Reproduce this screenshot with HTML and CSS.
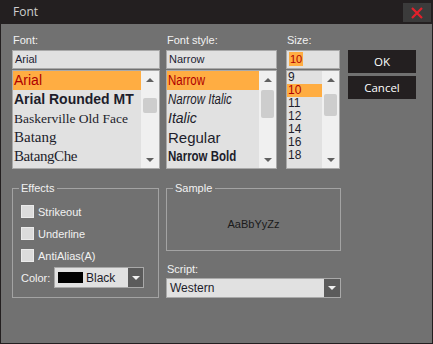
FILE: index.html
```html
<!DOCTYPE html>
<html lang="en">
<head>
    <meta charset="UTF-8">
    <title>Font</title>
    <link rel="stylesheet" href="styles.css">
</head>
<body>
    <div class="window">
        <div class="titlebar">
            <span class="title">Font</span>
            <button class="close">
                <svg width="12" height="12" viewBox="0 0 12 12"><path d="M1 1L11 11M11 1L1 11" stroke="#e3202b" stroke-width="2.2"/></svg>
            </button>
        </div>

        <div class="content">
            <div class="top">
                <div class="col col-font">
                    <div class="label">Font:</div>
                    <div class="field">Arial</div>
                    <div class="list">
                        <ul class="items">
                            <li class="sel f-arial">Arial</li>
                            <li class="f-rounded">Arial Rounded MT</li>
                            <li class="f-bask">Baskerville Old Face</li>
                            <li class="f-batang">Batang</li>
                            <li class="f-batangche">BatangChe</li>
                        </ul>
                        <div class="scrollbar">
                            <span class="arrow"><i class="tri up"></i></span>
                            <span class="track"><span class="thumb thumb-font"></span></span>
                            <span class="arrow"><i class="tri down"></i></span>
                        </div>
                    </div>
                </div>

                <div class="col col-style">
                    <div class="label">Font style:</div>
                    <div class="field">Narrow</div>
                    <div class="list">
                        <ul class="items">
                            <li class="sel"><span class="narrow">Narrow</span></li>
                            <li class="s-italic"><span class="narrow">Narrow Italic</span></li>
                            <li class="s-italic">Italic</li>
                            <li class="s-regular">Regular</li>
                            <li class="s-bold"><span class="narrow">Narrow Bold</span></li>
                        </ul>
                        <div class="scrollbar">
                            <span class="arrow"><i class="tri up"></i></span>
                            <span class="track"><span class="thumb thumb-style"></span></span>
                            <span class="arrow"><i class="tri down"></i></span>
                        </div>
                    </div>
                </div>

                <div class="col col-size">
                    <div class="label">Size:</div>
                    <div class="field"><span class="picked">10</span></div>
                    <div class="list">
                        <ul class="items sizes">
                            <li>9</li>
                            <li class="sel">10</li>
                            <li>11</li>
                            <li>12</li>
                            <li>14</li>
                            <li>16</li>
                            <li>18</li>
                        </ul>
                        <div class="scrollbar">
                            <span class="arrow"><i class="tri up"></i></span>
                            <span class="track"><span class="thumb thumb-size"></span></span>
                            <span class="arrow"><i class="tri down"></i></span>
                        </div>
                    </div>
                </div>

                <div class="buttons">
                    <button class="btn">OK</button>
                    <button class="btn">Cancel</button>
                </div>
            </div>

            <div class="bottom">
                <fieldset class="group effects">
                    <legend>Effects</legend>
                    <div class="check"><span class="box"></span>Strikeout</div>
                    <div class="check"><span class="box"></span>Underline</div>
                    <div class="check"><span class="box"></span>AntiAlias(A)</div>
                    <div class="color-row">
                        <span class="color-label">Color:</span>
                        <div class="combo color-combo">
                            <span class="swatch"></span>
                            <span>Black</span>
                            <span class="drop"><i class="tri down light"></i></span>
                        </div>
                    </div>
                </fieldset>

                <div class="right">
                    <fieldset class="group sample">
                        <legend>Sample</legend>
                        <div class="sample-text">AaBbYyZz</div>
                    </fieldset>
                    <div class="label script-label">Script:</div>
                    <div class="combo script-combo">
                        <span>Western</span>
                        <span class="drop"><i class="tri down light"></i></span>
                    </div>
                </div>
            </div>
        </div>
    </div>
</body>
</html>
```

FILE: styles.css
```css
* {
    box-sizing: border-box;
}

body {
    margin: 0;
    background-color: #231f20;
    font-family: "Liberation Sans", Arial, sans-serif;
    font-size: 11px;
}

.window {
    width: 433px;
    height: 344px;
    background-color: #717171;
    border: 1px solid #231f20;
    border-top: 0;
    display: flex;
    flex-direction: column;
}

.titlebar {
    height: 24px;
    flex: none;
    background-color: #231f20;
    display: flex;
    align-items: flex-start;
    justify-content: space-between;
    padding: 0 1px 0 12px;
}

.title {
    font-family: "Open Sans", sans-serif;
    font-size: 12px;
    line-height: 24px;
    color: #cfcfcf;
}

.close {
    width: 28px;
    height: 19px;
    margin-top: 3px;
    padding: 0;
    border: none;
    background-color: #3b3b3b;
    display: flex;
    align-items: center;
    justify-content: center;
}

.content {
    padding: 10px 0 0 11px;
}

/* top row: three pickers + buttons */
.top {
    display: flex;
}

.col-font {
    width: 148px;
    margin-right: 6px;
}

.col-style {
    width: 111px;
    margin-right: 9px;
}

.col-size {
    width: 54px;
    margin-right: 8px;
}

.label {
    height: 13px;
    line-height: 13px;
    margin-bottom: 3px;
    padding-left: 1px;
    color: #f2f2f2;
}

.field {
    height: 19px;
    line-height: 17px;
    padding: 0 2px;
    border: 1px solid #a9a9a9;
    background-color: #e1e1e1;
    color: #1d1d33;
}

.picked {
    background-color: #ffad42;
    color: #b00000;
    padding: 1px 1px;
}

.list {
    height: 99px;
    margin-top: 1px;
    border: 1px solid #a9a9a9;
    background-color: #e1e1e1;
    display: flex;
}

.items {
    flex: 1;
    list-style: none;
    margin: 0;
    padding: 0;
    overflow: hidden;
    color: #1d1d2b;
}

.items li {
    height: 19px;
    line-height: 19px;
    padding-left: 1px;
    white-space: nowrap;
    font-size: 14px;
}

.items li.sel {
    background-color: #ffad42;
    color: #b00000;
}

.f-rounded {
    font-weight: bold;
}

.f-bask {
    font-family: "Liberation Serif", serif;
    font-size: 13.5px !important;
}

.f-batang,
.f-batangche {
    font-family: "Liberation Serif", serif;
    font-size: 15px !important;
}

.f-batangche {
    letter-spacing: -0.4px;
}

/* no narrow face installed, squeeze the regular one */
.narrow {
    display: inline-block;
    transform: scaleX(0.82);
    transform-origin: left center;
}

.s-italic {
    font-style: italic;
}

.s-regular {
    font-size: 15px !important;
}

.s-bold {
    font-weight: bold;
}

.sizes li {
    height: 13px;
    line-height: 13px;
    font-size: 12px;
}

.scrollbar {
    width: 17px;
    background-color: #f0f0f0;
    display: flex;
    flex-direction: column;
}

.col-font .scrollbar {
    width: 18px;
}

.arrow {
    height: 17px;
    display: flex;
    align-items: center;
    justify-content: center;
}

.track {
    flex: 1;
}

.thumb {
    display: block;
    margin: 0 2px;
    background-color: #cdcdcd;
    border-radius: 2px;
}

.thumb-font {
    margin-top: 10px;
    height: 15px;
}

.thumb-style {
    margin-top: 2px;
    height: 28px;
}

.thumb-size {
    margin-top: 6px;
    height: 22px;
}

.tri {
    width: 0;
    height: 0;
    border-left: 4px solid transparent;
    border-right: 4px solid transparent;
}

.tri.up {
    border-bottom: 4px solid #606060;
}

.tri.down {
    border-top: 4px solid #606060;
}

.tri.light {
    border-top-color: #f0f0f0;
}

.buttons {
    width: 68px;
    margin-top: 16px;
    display: flex;
    flex-direction: column;
    gap: 3px;
}

.btn {
    height: 23px;
    border: none;
    background-color: #231f20;
    color: #ffffff;
    font-family: "Open Sans", sans-serif;
    font-size: 11.5px;
    padding: 0;
}

/* bottom: group boxes */
.bottom {
    display: flex;
    margin-top: 13px;
}

.group {
    margin: 0;
    border: 1px solid #a3a3a3;
    padding: 0 8px;
}

.group legend {
    padding: 0 3px 0 2px;
    margin-left: -2px;
    line-height: 13px;
    color: #f2f2f2;
}

.effects {
    width: 147px;
    height: 116px;
    padding-top: 10px;
    padding-bottom: 10px;
    display: flex;
    flex-direction: column;
    gap: 9px;
}

.check {
    height: 13px;
    display: flex;
    align-items: center;
    gap: 4px;
    color: #f2f2f2;
}

.box {
    width: 13px;
    height: 13px;
    background-color: #dcdcdc;
    border: 1px solid #ebebeb;
}

.color-row {
    display: flex;
    align-items: center;
    margin-top: -4px;
    color: #f2f2f2;
}

.color-label {
    width: 33px;
}

.combo {
    border: 1px solid #a9a9a9;
    background-color: #e1e1e1;
    color: #1d1d2b;
    display: flex;
    align-items: stretch;
}

.combo span {
    display: flex;
    align-items: center;
}

.color-combo {
    width: 90px;
    height: 21px;
    padding-left: 3px;
    font-size: 12px;
}

.swatch {
    width: 25px;
    margin: 4px 3px 4px 0;
    background-color: #000000;
}

.drop {
    margin-left: auto;
    width: 15px;
    background-color: #5b5b5b;
    justify-content: center;
}

.right {
    width: 175px;
    margin-left: 7px;
}

.sample {
    height: 69px;
}

.sample-text {
    height: 55px;
    padding-top: 3px;
    display: flex;
    align-items: center;
    justify-content: center;
    color: #1a1a1a;
}

.script-label {
    margin-top: 12px;
    margin-bottom: 2px;
}

.script-combo {
    height: 20px;
    padding-left: 3px;
    font-size: 12px;
}

.script-combo .drop {
    width: 16px;
}
```
